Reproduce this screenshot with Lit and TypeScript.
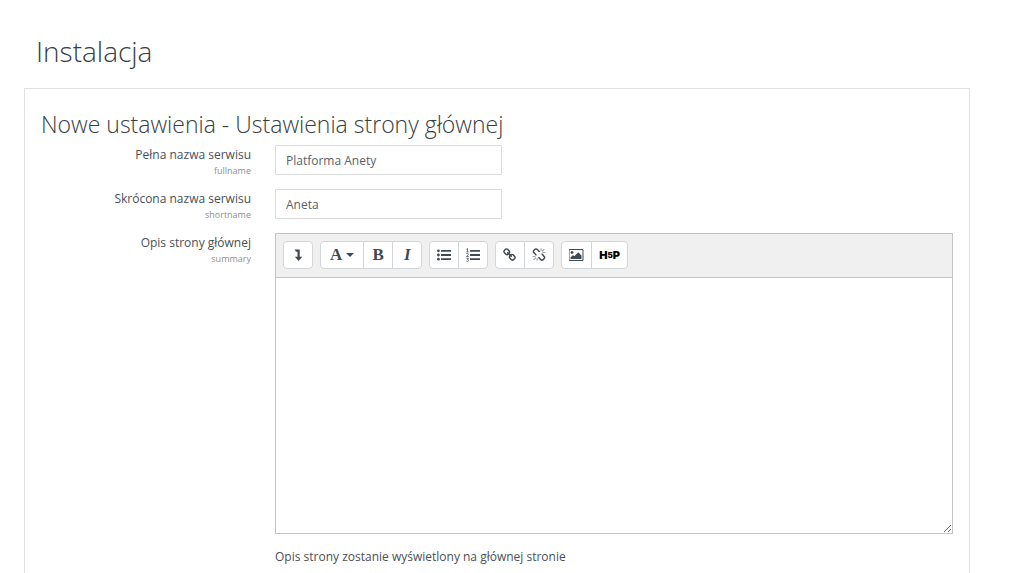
import { LitElement, html, css, svg } from "lit";
import { customElement, property } from "lit/decorators.js";

const LINK =
  "M1456 1216q0-40-28-68l-208-208q-28-28-68-28-42 0-72 32 3 3 19 18.5t21.5 21.5 15 19 13 25.5 3.5 27.5q0 40-28 68t-68 28q-15 0-27.5-3.5t-25.5-13-19-15-21.5-21.5-18.5-19q-33 31-33 73 0 40 28 68l206 207q27 27 68 27 40 0 68-26l147-146q28-28 28-67zm-703-705q0-40-28-68l-206-207q-28-28-68-28-39 0-68 27l-147 146q-28 28-28 67 0 40 28 68l208 208q27 27 68 27 42 0 72-31-3-3-19-18.5t-21.5-21.5-15-19-13-25.5-3.5-27.5q0-40 28-68t68-28q15 0 27.5 3.5t25.5 13 19 15 21.5 21.5 18.5 19q33-31 33-73zm895 705q0 120-85 203l-147 146q-83 83-203 83-121 0-204-85l-206-207q-83-83-83-203 0-123 88-209l-88-88q-86 88-208 88-120 0-204-84l-208-208q-84-84-84-204t85-203l147-146q83-83 203-83 121 0 204 85l206 207q83 83 83 203 0 123-88 209l88 88q86-88 208-88 120 0 204 84l208 208q84 84 84 204z";
const UNLINK =
  "M503 1271l-256 256q-10 9-23 9-12 0-23-9-9-10-9-23t9-23l256-256q10-9 23-9t23 9q9 10 9 23t-9 23zm169 41v320q0 14-9 23t-23 9-23-9-9-23v-320q0-14 9-23t23-9 23 9 9 23zm-224-224q0 14-9 23t-23 9h-320q-14 0-23-9t-9-23 9-23 23-9h320q14 0 23 9t9 23zm1264 128q0 120-85 203l-147 146q-83 83-203 83-121 0-204-85l-334-335q-21-21-42-56l239-18 273 274q28 28 68 27.5t68-27.5l147-146q28-28 28-67 0-40-28-68l-274-275 18-239q35 21 56 42l336 336q84 86 84 204zm-617-724l-239 18-273-274q-28-28-68-28-39 0-68 27l-147 146q-28 28-28 67 0 40 28 68l274 274-18 240q-35-21-56-42l-336-336q-84-86-84-204 0-120 85-203l147-146q83-83 203-83 121 0 204 85l334 335q21 21 42 56zm633 84q0 14-9 23t-23 9h-320q-14 0-23-9t-9-23 9-23 23-9h320q14 0 23 9t9 23zm-544-544v320q0 14-9 23t-23 9-23-9-9-23v-320q0-14 9-23t23-9 23 9 9 23zm407 151l-256 256q-11 9-23 9t-23-9q-9-10-9-23t9-23l256-256q10-9 23-9t23 9q9 10 9 23t-9 23z";
const PICTURE =
  "M576 576q0 80-56 136t-136 56-136-56-56-136 56-136 136-56 136 56 56 136zm1024 384v448h-1408v-192l320-320 160 160 512-512zm96-704h-1600q-13 0-22.5 9.5t-9.5 22.5v1216q0 13 9.5 22.5t22.5 9.5h1600q13 0 22.5-9.5t9.5-22.5v-1216q0-13-9.5-22.5t-22.5-9.5zm160 32v1216q0 66-47 113t-113 47h-1600q-66 0-113-47t-47-113v-1216q0-66 47-113t113-47h1600q66 0 113 47t47 113z";

const icons: Record<string, { box: string; body: unknown }> = {
  expand: { box: "0 0 14 14", body: svg`<path d="M3.5 1.5h5.2v7.3h2.6L7.6 13 3.9 8.8h2.6V3.7H5.2z"/>` },
  caret: { box: "0 0 8 14", body: svg`<path d="M0 5h8L4 9z"/>` },
  bullets: {
    box: "0 0 14 14",
    body: svg`<circle cx="1.4" cy="2.8" r="1.4"/><circle cx="1.4" cy="7" r="1.4"/><circle cx="1.4" cy="11.2" r="1.4"/><path d="M4 1.9h10v1.8H4zM4 6.1h10v1.8H4zM4 10.3h10v1.8H4z"/>`,
  },
  numbers: {
    box: "0 0 14 14",
    body: svg`<path d="M4 1.9h10v1.8H4zM4 6.1h10v1.8H4zM4 10.3h10v1.8H4z"/><path d="M.5 1.2 1.5.5v3.2M.4 3.8h2.2M.4 5.6q1-.7 1.7 0t-.3 1.5L.5 8.5h2.1M.4 10.2h2l-1 1.2q1.1 0 1.1.9T1.4 13.4q-.6 0-1-.4" fill="none" stroke="currentColor" stroke-width=".8"/>`,
  },
  link: { box: "0 0 1792 1792", body: svg`<path d=${LINK}/>` },
  unlink: { box: "0 0 1792 1792", body: svg`<path d=${UNLINK}/>` },
  picture: { box: "0 0 1920 1792", body: svg`<path d=${PICTURE}/>` },
};

const icon = (name: string) =>
  html`<svg class="icon ${name}" viewBox=${icons[name].box} aria-hidden="true">${icons[name].body}</svg>`;

@customElement("editor-toolbar")
class EditorToolbar extends LitElement {
  static styles = css`
    :host { display: flex; flex-wrap: wrap; gap: 7px; padding: 7px 7px 8px; background: #f0f0f0; border-bottom: 1px solid #c4c4c4; }
    .group { display: flex; background: #fff; border: 1px solid #d3d6d9; border-radius: 4px; overflow: hidden; }
    button {
      display: flex; align-items: center; justify-content: center; gap: 4px;
      box-sizing: border-box; min-width: 28px; height: 26px; padding: 0 7px;
      border: 0; background: none; color: #3f4a54;
      font: bold 17px/26px "Liberation Serif", serif; cursor: pointer;
    }
    button + button { min-width: 29px; border-left: 1px solid #d3d6d9; }
    .icon { width: 14px; height: 14px; fill: currentColor; flex: none; }
    .caret { width: 8px; }
    .picture { width: 15px; }
    .styles { padding: 0 9px; }
    .italic { font-style: italic; }
    .brand { color: #000; font: 900 11px/26px Inter, sans-serif; gap: 0; }
    .five { font-size: 8px; }
  `;
  render() {
    return html`
      <div class="group"><button type="button" aria-label="Pokaż więcej przycisków">${icon("expand")}</button></div>
      <div class="group">
        <button type="button" class="styles" aria-label="Style akapitu">A${icon("caret")}</button>
        <button type="button">B</button>
        <button type="button" class="italic">I</button>
      </div>
      <div class="group">
        <button type="button" aria-label="Lista nieuporządkowana">${icon("bullets")}</button>
        <button type="button" aria-label="Lista uporządkowana">${icon("numbers")}</button>
      </div>
      <div class="group">
        <button type="button" aria-label="Odnośnik">${icon("link")}</button>
        <button type="button" aria-label="Usuń odnośnik">${icon("unlink")}</button>
      </div>
      <div class="group">
        <button type="button" aria-label="Obraz">${icon("picture")}</button>
        <button type="button" class="brand"><span>H</span><span class="five">5</span><span>P</span></button>
      </div>
    `;
  }
}

@customElement("app-root")
class AppRoot extends LitElement {
  @property() fullname = "Platforma Anety";
  @property() shortname = "Aneta";

  static styles = css`
    :host {
      display: block; padding: 31px 54px 0 24px; background: #fff; color: #4a4f54;
      font: 12px/18px "Open Sans", "Noto Sans", sans-serif;
    }
    h1, h2 { margin: 0; font-weight: 300; color: #373e43; }
    h1 { padding: 0 12px; font-size: 28px; line-height: 40px; }
    .card { margin-top: 17px; padding: 20px 4px 16px; border: 1px solid #e0e0e0; }
    h2 { padding: 0 12px; font-size: 23px; line-height: 30px; margin-bottom: 6px; }
    .row { display: grid; grid-template-columns: 1fr 3fr; margin-bottom: 11px; }
    .caption, .field { padding: 0 12px; min-width: 0; }
    .caption { padding-top: 1px; text-align: right; }
    .caption label { display: block; }
    .key { display: block; font-size: 9px; line-height: 14px; color: #8c9196; }
    input {
      display: block; box-sizing: border-box; width: 227px; max-width: 100%; height: 30px; padding: 0 10px;
      border: 1px solid #dcdcdc; border-radius: 0; background: #fff; color: #5a6066; font: inherit;
    }
    .editor { border: 1px solid #c4c4c4; }
    textarea {
      display: block; box-sizing: border-box; width: 100%; height: 255px; padding: 8px;
      border: 0; background: #fff; color: inherit; font: inherit; resize: vertical; outline: 0;
    }
    .help { margin: 14px 0 0; }
  `;

  render() {
    return html`
      <h1>Instalacja</h1>
      <form class="card">
        <h2>Nowe ustawienia - Ustawienia strony głównej</h2>
        <div class="row">
          <div class="caption"><label for="fullname">Pełna nazwa serwisu</label><span class="key">fullname</span></div>
          <div class="field"><input id="fullname" type="text" .value=${this.fullname} /></div>
        </div>
        <div class="row">
          <div class="caption"><label for="shortname">Skrócona nazwa serwisu</label><span class="key">shortname</span></div>
          <div class="field"><input id="shortname" type="text" .value=${this.shortname} /></div>
        </div>
        <div class="row">
          <div class="caption"><label for="summary">Opis strony głównej</label><span class="key">summary</span></div>
          <div class="field">
            <div class="editor"><editor-toolbar></editor-toolbar><textarea id="summary"></textarea></div>
            <p class="help">Opis strony zostanie wyświetlony na głównej stronie</p>
          </div>
        </div>
      </form>
    `;
  }
}
